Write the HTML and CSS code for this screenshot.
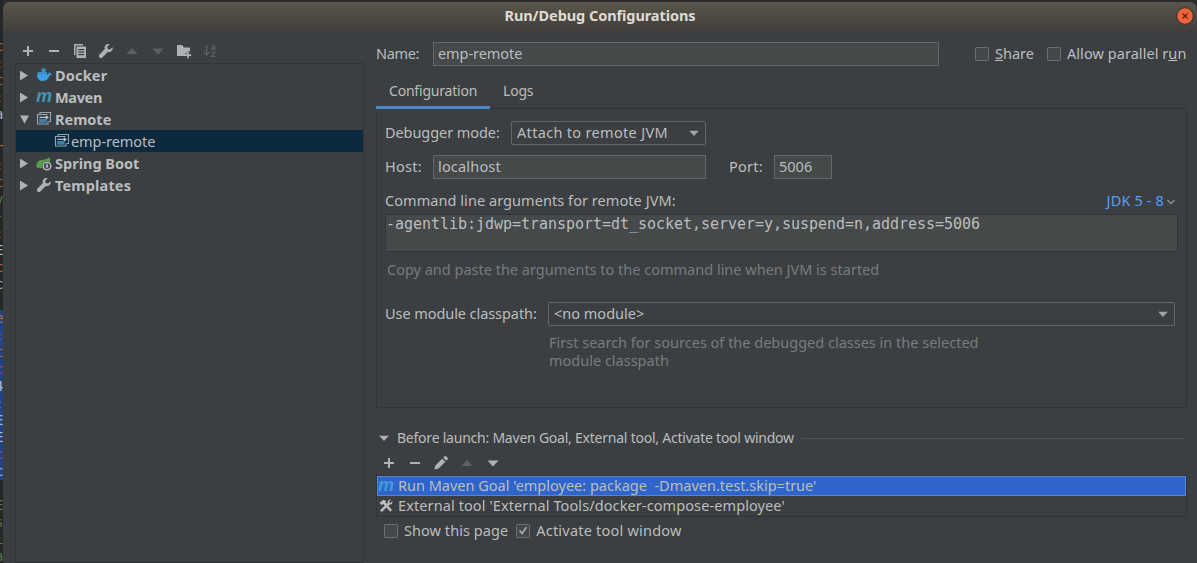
FILE: index.html
```html
<!DOCTYPE html>
<html lang="en">
<head>
<meta charset="utf-8">
<title>Run/Debug Configurations</title>
<link rel="stylesheet" href="styles.css">
</head>
<body>
<svg width="0" height="0" class="defs">
  <symbol id="plus" viewBox="0 0 16 16"><path d="M7 3h2v4h4v2H9v4H7V9H3V7h4z"/></symbol>
  <symbol id="minus" viewBox="0 0 16 16"><path d="M3 7h10v2H3z"/></symbol>
  <symbol id="copy" viewBox="0 0 16 16"><path d="M2 1h9v1.500H3.500V12H2zM4.500 3.500H14V15H4.500zM6.200 6v1.200h6V6zm0 2.500v1.200h6V8.500zm0 2.500v1.200h6V11z" fill-rule="evenodd"/></symbol>
  <symbol id="wrench" viewBox="0 0 16 16"><path d="M14.600 4.200 12 6.600 9.700 6 9.200 3.800 11.700 1.300C9.900.7 8.100 1.300 7.200 2.700 6.500 3.800 6.400 5 6.900 6.100L1.500 11.500C.6 12.500.8 13.800 1.500 14.500s2 .8 2.900-.1L9.700 9c1.300.4 2.900.1 3.900-.9s1.400-2.500 1-3.900z"/></symbol>
  <symbol id="up" viewBox="0 0 16 16"><path d="M2.500 11 8 5l5.500 6z"/></symbol>
  <symbol id="down" viewBox="0 0 16 16"><path d="M2.500 5.500h11L8 11.500z"/></symbol>
  <symbol id="folder" viewBox="0 0 16 16"><path d="M1 2h5l2 2.500h6v4h-3v2H9V13H1z"/><path d="M11.200 9h1.700v2.300h2.300V13h-2.300v2.300h-1.700V13H9v-1.700h2.200z"/></symbol>
  <symbol id="sort" viewBox="0 0 16 16"><path d="M4 2h1.400v8.200L7.400 8v2.200L4.700 13 2 10.200V8l2 2.200z"/><path d="M9.800 3h3v3.500h-3V4.800h3M9.500 9h3.500l-3.500 4.300h4" fill="none" stroke="currentColor" stroke-width="1.200"/></symbol>
  <symbol id="remote" viewBox="0 0 16 16"><path d="M4 3.500V1.500h10.500v9H13M11.500 3.500H1.500v9.500h10.500V10" fill="none" stroke="#93a6b1" stroke-width="1.100"/><path d="M3 8h7.500v3.700H3z" fill="#3b82a8"/><path d="M3.500 5.700h6.300V4l3.200 2.400L9.800 8.800V7H3.500z" fill="#b5c3ca"/></symbol>
  <symbol id="chev" viewBox="0 0 10 10"><path d="M1.500 3 5 6.500 8.500 3" fill="none" stroke="#8d9194" stroke-width="1.400"/></symbol>
</svg>
<div class="screen">
  <div class="code">
    <i></i><i></i><i class="o">c</i><i>:</i><i class="o">t</i><i>:</i><i>a</i><i></i><i class="o">r</i><i>:</i><i class="o">t</i><i class="g">v</i><i class="g">-</i><i>:</i><i>E</i><i class="o">c</i><i>c</i><i></i><i class="o b">e</i><i class="b">:</i><i class="o b">t</i><i class="r b">c</i><i class="b">4</i><i class="b">:</i><i class="b">E</i><i class="b">E</i><i class="r b">c</i><i class="b">c</i><i></i><i class="g">E</i><i class="g">s</i><i class="g">i</i><i class="g">a</i>
  </div>
  <div class="dialog">
    <header class="title"><span class="t-title">Run/Debug Configurations</span>
      <svg class="close" viewBox="0 0 18 18"><circle cx="9" cy="9" r="8.300" fill="#f0643a" stroke="#33302b"/><path d="m6.500 6.500 5 5m0-5-5 5" stroke="#5b2412" stroke-width="1.300"/></svg>
    </header>
    <div class="main">
      <aside class="side">
        <div class="tools">
          <svg><use href="#plus"/></svg><svg><use href="#minus"/></svg><svg><use href="#copy"/></svg><svg><use href="#wrench"/></svg><svg class="off"><use href="#up"/></svg><svg class="off"><use href="#down"/></svg><svg><use href="#folder"/></svg><svg class="off"><use href="#sort"/></svg>
        </div>
        <div class="tree">
          <div class="node"><b class="closed"></b><svg viewBox="0 0 16 16"><path d="M5.500 1.500h4V5h-4zM1.500 5h9.500v3h-9.500z" fill="#3b8fc9"/><path d="M1 7.500h10.500c1 0 1.500-1 1.300-2.500 1 .5 1.300 1 1.400 1.600.7-.1 1.300 0 1.800.4-.5 1-1.400 1.300-2.400 1.300C12.700 11.500 10.500 14 7 14c-4 0-6-2.500-6-6.500z" fill="#3d9fe6"/></svg><span class="looser">Docker</span></div>
          <div class="node"><b class="closed"></b><em class="m">m</em><span class="t-maven">Maven</span></div>
          <div class="node"><b class="open"></b><svg><use href="#remote"/></svg><span>Remote</span></div>
          <div class="node child"><svg><use href="#remote"/></svg><span class="tight">emp-remote</span></div>
          <div class="node"><b class="closed"></b><svg viewBox="0 0 16 16"><path d="M.5 12C0 7 3 5 7 4.800 10 4.600 12 3.500 13.500 2c1.500 4 .5 7-2 9.500-3 2.500-7 2-8.500 1L1.500 13.500z" fill="#5a9e48"/><circle cx="11" cy="11" r="5" fill="#3c3f41"/><circle cx="11" cy="11" r="3.800" fill="none" stroke="#aeb9c0" stroke-width="1.500"/><path d="M11 8.500v2.500" stroke="#aeb9c0" stroke-width="1.300"/><circle cx="11" cy="11.500" r="1.300" fill="#aeb9c0"/></svg><span>Spring Boot</span></div>
          <div class="node"><b class="closed"></b><svg><use href="#wrench"/></svg><span class="looser">Templates</span></div>
        </div>
      </aside>
      <section class="right">
        <div class="row name"><label><span class="t-maven">Name:</span></label><div class="field"><span class="tight">emp-remote</span></div>
          <i class="box"></i><span class="share"><u>S</u>hare</span><i class="box"></i><span class="loose">Allow parallel r<u>u</u>n</span></div>
        <nav class="tabs"><div class="tab active"><span>Configuration</span></div><div class="tab"><span class="t-logs">Logs</span></div></nav>
        <div class="panel">
          <div class="row mode"><label><span class="tight">Debugger mode:</span></label><div class="combo"><span class="t-attach">Attach to remote JVM</span><svg class="tri"><use href="#down"/></svg></div></div>
          <div class="row host"><label><span class="t-host">Host:</span></label><div class="field"><span class="looser">localhost</span></div><label class="port"><span class="t-host">Port:</span></label><div class="field short"><span>5006</span></div></div>
          <div class="row args"><span class="loose">Command line arguments for remote JVM:</span><span class="jdk">JDK 5 - 8</span><svg class="chev"><use href="#chev"/></svg></div>
          <div class="area">-agentlib:jdwp=transport=dt_socket,server=y,suspend=n,address=5006</div>
          <div class="hint"><span>Copy and paste the arguments to the command line when JVM is started</span></div>
          <div class="row module"><label><span class="tight">Use module classpath:</span></label><div class="combo"><span>&lt;no module&gt;</span><svg class="tri"><use href="#down"/></svg></div></div>
          <div class="hint two"><span>First search for sources of the debugged classes in the selected</span><br><span>module classpath</span></div>
        </div>
        <div class="row before"><svg class="tri"><use href="#down"/></svg><span class="t-before">Before launch: Maven Goal, External tool, Activate tool window</span><hr></div>
        <div class="tools lower"><svg><use href="#plus"/></svg><svg><use href="#minus"/></svg><svg viewBox="0 0 16 16"><path d="m1.500 14.500.7-3.800 7-7 3.100 3.100-7 7zM10.200 2.700l1.300-1.300c.5-.5 1.200-.5 1.700 0l1.400 1.400c.5.500.5 1.200 0 1.700l-1.300 1.300z"/></svg><svg class="off"><use href="#up"/></svg><svg><use href="#down"/></svg></div>
        <div class="list">
          <div class="item sel"><em class="m">m</em><span>Run Maven Goal 'employee: package &nbsp;-Dmaven.test.skip=true'</span></div>
          <div class="item"><svg viewBox="0 0 16 16"><path d="m1.500 4.700 4-3 3 1.600-1.300.7 6.800 8-1.700 1.700-7-7.700L3.500 7z"/><path d="m14.300 3.200-2 1.900-1.400-1.400 2-2c-1.500-.5-3.500.8-3.200 3L2 12.300 3.800 14l7.500-7.200c2 .3 3.600-1.700 3-3.600z"/></svg><span class="t-ext">External tool 'External Tools/docker-compose-employee'</span></div>
        </div>
        <div class="row checks"><i class="box"></i><span class="show loose">Show this page</span><i class="box"><svg viewBox="0 0 14 14"><path d="m3 6.500 3 3.500 5-7.500" fill="none" stroke="#b5b7b8" stroke-width="1.800"/></svg></i><span class="t-activate">Activate tool window</span></div>
      </section>
    </div>
  </div>
</div>
</body>
</html>
```

FILE: styles.css
```css
* { box-sizing: border-box; }
body { margin: 0; background: #2b2b2b; color: #bbbdbe; font: 14.5px/18px "Noto Sans", sans-serif; overflow: hidden; }
svg { width: 16px; height: 16px; flex: none; fill: currentColor; display: block; }
span { white-space: nowrap; padding-bottom: 2px; }
.defs { position: absolute; width: 0; height: 0; }
.tight { letter-spacing: -0.07px; }
.loose { letter-spacing: 0.06px; }
.looser { letter-spacing: 0.18px; }
.t-title { letter-spacing: -0.07px; padding-bottom: 4px; }
.t-maven { letter-spacing: -0.35px; }
.t-attach { letter-spacing: 0.32px; }
.t-host { letter-spacing: 0.27px; }
.t-logs { letter-spacing: -0.2px; }
.t-ext { letter-spacing: 0.1px; }
.t-activate { letter-spacing: 0.22px; }
.t-before { font-size: 14px; letter-spacing: -0.23px; padding-bottom: 0; }
.screen { display: flex; width: 1197px; height: 563px; }
.code { width: 3px; flex: none; overflow: hidden; background: #252626; padding-top: 4px; }
.code i { display: block; height: 17px; font: 14px/17px "DejaVu Sans Mono", monospace; color: #a9b7c6; text-indent: -5px; }
.code .o { color: #b8692f; }
.code .g { color: #527a4a; }
.code .r { color: #a5497a; }
.code .b { background: #214283; }
.dialog { flex: 1; margin-top: 2px; border-radius: 7px 7px 0 0; background: #3c3f41; }
.title { height: 30px; border-radius: 7px 7px 0 0; background: linear-gradient(#5a564d, #403e39); display: flex; align-items: center; justify-content: center; position: relative; font-weight: bold; color: #dfdbd2; }
.close { position: absolute; right: 3px; top: 5px; width: 18px; height: 18px; }
.main { display: flex; }
.side { width: 361px; padding-left: 12px; }
.tools { display: flex; gap: 10px; height: 31px; padding: 11px 0 0 5px; color: #afb1b3; }
.off { color: #5d6062; }
.tree { height: 500px; border: 1px solid #323537; }
.node { height: 22px; display: flex; align-items: center; font-weight: bold; padding-left: 4px; }
.node span { padding-bottom: 0; }
.node svg { margin-right: 3px; color: #afb1b3; }
.node b { width: 16px; height: 10px; margin-top: 1px; flex: none; background: #b0b2b3; clip-path: polygon(0 0, 8px 5px, 0 10px); }
.node b.open { clip-path: polygon(0 1px, 9px 1px, 4.5px 9px); }
.node.child { background: #0d293e; font-weight: normal; padding-left: 38px; }
.node.child svg { margin-right: 1px; }
.m { width: 16px; font: italic bold 18px/16px "Open Sans", sans-serif; color: #3f93b5; flex: none; height: 20px; }
.node .m { margin-right: 3px; }
.right { width: 811px; margin-left: 12px; }
.row { display: flex; align-items: center; height: 24px; }
.row label { padding-bottom: 2px; }
.name { margin-top: 10px; }
.name label { width: 57px; }
.field { height: 24px; border: 1px solid #646667; background: #45494a; padding: 1px 4px; }
.name .field { width: 506px; margin-right: 36px; }
.box { width: 14px; height: 14px; border: 1px solid #6b6e70; border-radius: 1px; background: #43494a; flex: none; margin-right: 6px; }
.box svg { width: 12px; height: 12px; }
.share { margin-right: 13px; }
.tabs { display: flex; height: 42px; }
.tab { padding: 16px 13px 0; height: 43px; font-size: 14px; }
.active { width: 114px; border-bottom: 3px solid #4a88c7; letter-spacing: -0.2px; }
.panel { height: 300px; border: 1px solid #323537; padding: 12px 8px 0; }
.combo { height: 24px; border: 1px solid #646667; border-radius: 2px; display: flex; align-items: center; justify-content: space-between; padding: 0 4px 0 5px; }
.tri { width: 14px; height: 14px; color: #a0a3a5; }
.mode label { width: 126px; }
.mode .combo { width: 195px; }
.host { margin-top: 10px; }
.host label { width: 48px; }
.host .field { width: 273px; }
.host .port { margin-left: 23px; width: 45px; }
.host .short { width: 58px; }
.args { margin-top: 10px; }
.jdk { margin-left: auto; color: #589df6; letter-spacing: 0.15px; }
.chev { width: 10px; height: 10px; margin: 2px 2px 0 2px; }
.area { width: 793px; height: 38px; border: 1px solid #323537; background: #45494a; font: 15px/18px "DejaVu Sans Mono", monospace; letter-spacing: -0.03px; margin-top: 1px; white-space: pre; }
.hint { color: #787b7d; margin: 8px 0 0 2px; }
.module { margin-top: 24px; }
.module label { width: 163px; }
.module .combo { width: 627px; }
.two { margin: 7px 0 0 164px; }
.before { margin-top: 18px; padding-left: 1px; }
.before .tri { margin-right: 6px; color: #afb1b3; }
.before hr { border: 0; height: 1px; background: #515456; flex: 1; margin: 0 3px 0 7px; }
.lower { height: 25px; padding-top: 5px; }
.list { height: 42px; border: 1px solid #323537; }
.item { height: 20px; display: flex; align-items: center; padding-left: 1px; }
.item svg, .item .m { margin-right: 4px; }
.sel { background: #2f65ca; outline: 1px solid #5684d4; outline-offset: -1px; }
.sel .m { color: #3d9bdc; }
.checks { padding-left: 8px; margin-top: 2px; }
.show { margin-right: 8px; }
```
